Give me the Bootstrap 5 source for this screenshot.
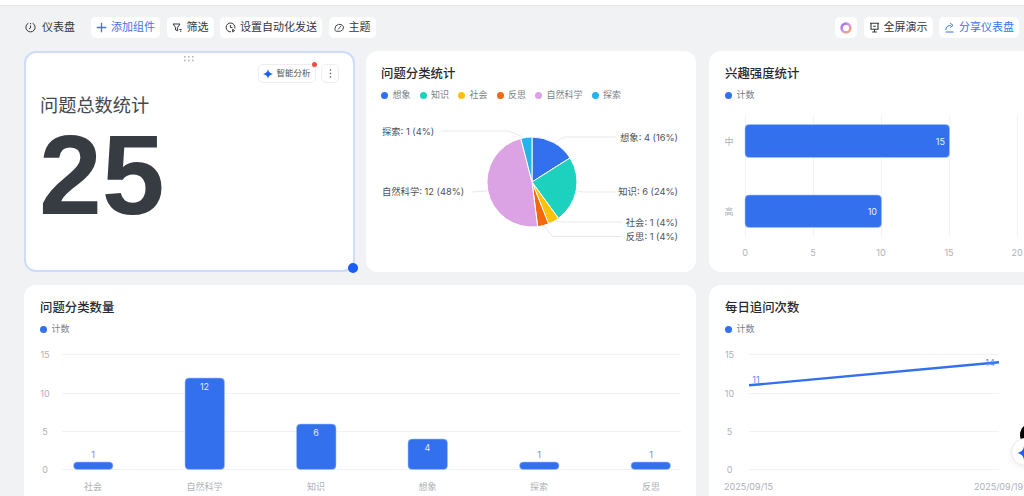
<!doctype html>
<html lang="zh-CN">
<head>
<meta charset="utf-8">
<title>仪表盘</title>
<link href="https://cdn.jsdelivr.net/npm/bootstrap@5.3.0/dist/css/bootstrap.min.css" rel="stylesheet">
<style>
html,body{height:496px;overflow:hidden}
body{background:#f1f2f4;font-family:Inter,"Noto Sans CJK SC",sans-serif;color:#33363b;width:1024px}
.topstrip{height:6px;background:#fff;border-bottom:1px solid #e6e8eb}
.toolbar{height:45px;padding:11px 5px 13px 25px;font-size:11px}
.pagename{margin-right:16px;gap:6px;color:#33363b;font-size:11px}
.toolgroup{gap:6.5px}
.tool-btn{height:21px;padding:0 5px;border:0;border-radius:5px;background:#fff;font-size:11px;line-height:21px;gap:4px;color:#33363b;white-space:nowrap}
.tool-btn.accent,.tool-btn.accent:hover{color:#3a74f0}
.tool-btn.icon-only{width:22px;padding:0}
.tool-btn svg{flex:none}
.board{display:grid;grid-template-columns:672px 340px;grid-template-rows:221px 240px;gap:13px;padding-left:24px;width:1060px}
.firstrow{gap:11px}
.panel{border:0;border-radius:12px;background:#fff;overflow:hidden}
.panel-a{width:331px;overflow:visible;border:2px solid #cddcfd;padding:0 14px}
.panel-b{width:330px}
.panel-head{padding:14px 15px 0}
.panel-wide .panel-head{padding-left:16px}
.panel-title{font-size:12.4px;line-height:18px;color:#26292e;font-weight:500}
.legend-row{margin-top:6px;gap:9px;font-size:9px;line-height:12px;color:#7a7f87}
.legend-dot{width:7px;height:7px;border-radius:50%;margin-right:4.5px;display:inline-block;flex:none}
.chart{display:block;margin-top:9px}
.chart text{font-size:9px;font-family:Inter,"Noto Sans CJK SC",sans-serif}
.chart text.pie-t{font-size:9.3px}
.axis-t{fill:#adb1b8}
.pie-t{fill:#4d5158}
.grid-l{stroke:#f1f2f4;stroke-width:1;fill:none}
.lead-l{stroke:#e7e9ec;stroke-width:1;fill:none}
.bar-s{fill:#3370ee;stroke:#a6c2f8;stroke-width:.6}
.val-w{fill:#e6edfd}
.val-b{fill:#5b8ef2}
.big-title{font-size:18.2px;line-height:24px;color:#44484e;margin-top:40px}
.big-num{font-family:"Liberation Sans",Arial,sans-serif;font-weight:700;font-size:113px;line-height:113px;color:#373c43;margin-top:2px;margin-left:-1px}
.grip{position:absolute;left:158px;top:3px;line-height:0}
.panel-actions{position:absolute;right:14px;top:11px;gap:5px}
.ai-btn{height:19px;padding:0 4.5px;border:1px solid #eceef1;border-radius:5px;background:#fff;font-size:8.5px;gap:3px;color:#4b4f55;position:relative;white-space:nowrap}
.more-btn{width:18px;height:19px;padding:0;border:1px solid #eceef1;border-radius:5px;background:#fff}
.red-dot{position:absolute;right:-2px;top:-3px;width:5px;height:5px;border-radius:50%;background:#f54a45}
.handle{position:absolute;right:-4.5px;bottom:-2.5px;width:10px;height:10px;border-radius:50%;background:#1a5cf5}
.blob{position:absolute;left:1020px;top:423px;width:24px;height:24px;border-radius:50%;background:#000}
.float-ai{position:absolute;left:1011px;top:438px;width:28px;height:28px;border-radius:50%;background:#fff;border:1px solid #e9ebee;box-shadow:0 2px 6px rgba(0,0,0,.06)}
.float-ai svg{position:absolute;left:5px;top:7px}
</style>
</head>
<body>
<div class="topstrip"></div>
<div class="toolbar d-flex align-items-center">
  <div class="pagename d-flex align-items-center">
    <svg width="11" height="11" viewBox="0 0 11 11" fill="none" stroke="#33363b" stroke-width="1"><path d="M3.4 1.200A4.600 4.600 0 1 0 7.600 1.200"/><path d="M5.500 1v1.200M5.500 3.500v2.400L4 6.800"/></svg>
    <span>仪表盘</span>
  </div>
  <div class="d-flex align-items-center toolgroup">
    <button class="btn tool-btn accent d-flex align-items-center"><svg width="11" height="11" viewBox="0 0 11 11" stroke="#3a74f0" stroke-width="1.300"><path d="M5.500 .8v9.400M.8 5.500h9.400"/></svg><span>添加组件</span></button>
    <button class="btn tool-btn d-flex align-items-center"><svg width="11" height="11" viewBox="0 0 11 11" fill="none" stroke="#33363b" stroke-width="1"><path d="M1 2h7L5.600 5.400v3.400L3.600 8V5.400zM7.400 7.500h2.200M7.900 9.200h1.400"/></svg><span>筛选</span></button>
    <button class="btn tool-btn d-flex align-items-center"><svg width="11" height="11" viewBox="0 0 11 11" fill="none" stroke="#33363b" stroke-width="1"><path d="M9.800 6.500A4.400 4.400 0 1 0 6 9.800"/><path d="M5.400 3v2.600h2M7.600 7.400l2 1.200-2 1.200z"/></svg><span>设置自动化发送</span></button>
    <button class="btn tool-btn d-flex align-items-center"><svg width="11" height="11" viewBox="0 0 12 11" fill="none" stroke="#33363b" stroke-width="1"><path d="M1 7a5 5 0 0 1 9.500-2.200A5 5 0 0 1 7 9.600H3A2 2 0 0 1 1 7zM4.500 7.500 8 3.500"/></svg><span>主题</span></button>
  </div>
  <div class="d-flex align-items-center ms-auto toolgroup">
    <button class="btn tool-btn icon-only d-flex align-items-center justify-content-center"><svg width="12" height="12" viewBox="0 0 12 12" fill="none" stroke-width="2.600"><defs><linearGradient id="ring" x1="0" y1="0" x2="1" y2="1"><stop offset="0" stop-color="#8f6bf2"/><stop offset=".5" stop-color="#d79ad9"/><stop offset="1" stop-color="#ffa366"/></linearGradient></defs><circle cx="6" cy="6" r="4.400" stroke="url(#ring)"/></svg></button>
    <button class="btn tool-btn d-flex align-items-center"><svg width="11" height="11" viewBox="0 0 11 11" fill="none" stroke="#33363b" stroke-width="1.100"><path d="M1 1.200h9M2 1.200v6h7v-6M5.500 7.200v2.600M3.200 10h4.600M4.200 4.200h2.600"/></svg><span>全屏演示</span></button>
    <button class="btn tool-btn accent d-flex align-items-center"><svg width="11" height="11" viewBox="0 0 11 11" fill="none" stroke="#3a74f0" stroke-width="1"><path d="M1.500 10h8M1.800 8c0-3 2-4.600 5-4.600M6.200 1.200 9 3.400 6.200 5.600"/></svg><span>分享仪表盘</span></button>
  </div>
</div>

<div class="board">
  <div class="d-flex firstrow">
    <div class="card panel panel-a position-relative">
      <div class="grip"><svg width="11" height="6" viewBox="0 0 11 6" fill="#b3b7bd"><rect x="0" y="0" width="1.600" height="1.600"/><rect x="4" y="0" width="1.600" height="1.600"/><rect x="8" y="0" width="1.600" height="1.600"/><rect x="0" y="3.600" width="1.600" height="1.600"/><rect x="4" y="3.600" width="1.600" height="1.600"/><rect x="8" y="3.600" width="1.600" height="1.600"/></svg></div>
      <div class="panel-actions d-flex">
        <div class="ai-btn d-flex align-items-center"><svg width="10" height="10" viewBox="0 0 12 12" fill="#1f5ff0"><path d="M6 0c.5 3.400 2.200 5.300 6 6-3.800.7-5.500 2.600-6 6-.5-3.400-2.200-5.300-6-6 3.800-.7 5.500-2.600 6-6z"/></svg><span>智能分析</span><i class="red-dot"></i></div>
        <div class="more-btn d-flex align-items-center justify-content-center"><svg width="3" height="9" viewBox="0 0 3 9" fill="#55595f"><circle cx="1.500" cy="1" r=".8"/><circle cx="1.500" cy="4.500" r=".8"/><circle cx="1.500" cy="8" r=".8"/></svg></div>
      </div>
      <div class="big-title">问题总数统计</div>
      <div class="big-num">25</div>
      <i class="handle"></i>
    </div>

    <div class="card panel panel-b">
      <div class="panel-head">
        <div class="panel-title">问题分类统计</div>
        <div class="legend-row d-flex">
          <span class="d-flex align-items-center"><i class="legend-dot" style="background:#3370ee"></i>想象</span>
          <span class="d-flex align-items-center"><i class="legend-dot" style="background:#1dd1bf"></i>知识</span>
          <span class="d-flex align-items-center"><i class="legend-dot" style="background:#ffc107"></i>社会</span>
          <span class="d-flex align-items-center"><i class="legend-dot" style="background:#f2690d"></i>反思</span>
          <span class="d-flex align-items-center"><i class="legend-dot" style="background:#dba2e4"></i>自然科学</span>
          <span class="d-flex align-items-center"><i class="legend-dot" style="background:#25b4ea"></i>探索</span>
        </div>
      </div>
      <svg class="chart" width="330" height="162" viewBox="366 110 330 162">
        <path class="lead-l" d="M441 131H509L523 137"/>
        <path class="lead-l" d="M616 137H564L554 143"/>
        <path class="lead-l" d="M471 192L487 191"/>
        <path class="lead-l" d="M616 192H583L577 191"/>
        <path class="lead-l" d="M622 222H558L556 221"/>
        <path class="lead-l" d="M622 236.500H553L543 225"/>
        <g transform="translate(532 182)" stroke="#fff" stroke-width="1">
          <path fill="#3370ee" d="M0 0V-45A45 45 0 0 1 38 -24.100Z"/>
          <path fill="#1dd1bf" d="M0 0L38 -24.100A45 45 0 0 1 26.450 36.400Z"/>
          <path fill="#ffc107" d="M0 0L26.450 36.400A45 45 0 0 1 16.570 41.840Z"/>
          <path fill="#f2690d" d="M0 0L16.570 41.840A45 45 0 0 1 5.640 44.650Z"/>
          <path fill="#dba2e4" d="M0 0L5.640 44.650A45 45 0 0 1 -11.190 -43.590Z"/>
          <path fill="#25b4ea" d="M0 0L-11.190 -43.590A45 45 0 0 1 0 -45Z"/>
        </g>
        <text class="pie-t" x="382" y="135">探索: 1 (4%)</text>
        <text class="pie-t" x="678" y="141" text-anchor="end">想象: 4 (16%)</text>
        <text class="pie-t" x="382" y="195">自然科学: 12 (48%)</text>
        <text class="pie-t" x="678" y="195" text-anchor="end">知识: 6 (24%)</text>
        <text class="pie-t" x="678" y="225.500" text-anchor="end">社会: 1 (4%)</text>
        <text class="pie-t" x="678" y="240" text-anchor="end">反思: 1 (4%)</text>
      </svg>
    </div>
  </div>

  <div class="card panel panel-wide">
    <div class="panel-head">
      <div class="panel-title">兴趣强度统计</div>
      <div class="legend-row d-flex"><span class="d-flex align-items-center"><i class="legend-dot" style="background:#3370ee"></i>计数</span></div>
    </div>
    <svg class="chart" width="340" height="162" viewBox="709 110 340 162">
      <path class="grid-l" d="M745.500 116V236M813.500 116V236M881.500 116V236M949.500 116V236M1017.500 116V236"/>
      <rect class="bar-s" x="745" y="124.500" width="204.500" height="33" rx="4"/>
      <rect class="bar-s" x="745" y="195" width="136.500" height="32.500" rx="4"/>
      <text class="val-w" x="945" y="144.500" text-anchor="end">15</text>
      <text class="val-w" x="877" y="214.500" text-anchor="end">10</text>
      <text class="axis-t" x="729" y="144.500" text-anchor="middle">中</text>
      <text class="axis-t" x="729" y="214.500" text-anchor="middle">高</text>
      <text class="axis-t" x="745" y="256" text-anchor="middle">0</text>
      <text class="axis-t" x="813" y="256" text-anchor="middle">5</text>
      <text class="axis-t" x="881" y="256" text-anchor="middle">10</text>
      <text class="axis-t" x="949" y="256" text-anchor="middle">15</text>
      <text class="axis-t" x="1017" y="256" text-anchor="middle">20</text>
    </svg>
  </div>

  <div class="card panel panel-wide">
    <div class="panel-head">
      <div class="panel-title">问题分类数量</div>
      <div class="legend-row d-flex"><span class="d-flex align-items-center"><i class="legend-dot" style="background:#3370ee"></i>计数</span></div>
    </div>
    <svg class="chart" width="672" height="156" viewBox="24 344 672 156">
      <path class="grid-l" d="M62 354.500H681M62 393.500H681M62 431.500H681M62 469.500H681"/>
      <text class="axis-t" x="45" y="358" text-anchor="middle">15</text>
      <text class="axis-t" x="45" y="396.500" text-anchor="middle">10</text>
      <text class="axis-t" x="45" y="435" text-anchor="middle">5</text>
      <text class="axis-t" x="45" y="473" text-anchor="middle">0</text>
      <rect class="bar-s" x="73.500" y="462" width="39.500" height="7.500" rx="3.700"/>
      <rect class="bar-s" x="185" y="378" width="39.500" height="91.500" rx="4"/>
      <rect class="bar-s" x="296.500" y="424" width="39.500" height="45.500" rx="4"/>
      <rect class="bar-s" x="408" y="439" width="39.500" height="30.500" rx="4"/>
      <rect class="bar-s" x="519.500" y="462" width="39.500" height="7.500" rx="3.700"/>
      <rect class="bar-s" x="631" y="462" width="39.500" height="7.500" rx="3.700"/>
      <text class="val-b" x="93" y="457.500" text-anchor="middle">1</text>
      <text class="val-w" x="204.500" y="389.500" text-anchor="middle">12</text>
      <text class="val-w" x="316" y="435.500" text-anchor="middle">6</text>
      <text class="val-w" x="427.500" y="450.500" text-anchor="middle">4</text>
      <text class="val-b" x="539" y="457.500" text-anchor="middle">1</text>
      <text class="val-b" x="651" y="457.500" text-anchor="middle">1</text>
      <text class="axis-t" x="93" y="490" text-anchor="middle">社会</text>
      <text class="axis-t" x="204.500" y="490" text-anchor="middle">自然科学</text>
      <text class="axis-t" x="316" y="490" text-anchor="middle">知识</text>
      <text class="axis-t" x="427.500" y="490" text-anchor="middle">想象</text>
      <text class="axis-t" x="539" y="490" text-anchor="middle">探索</text>
      <text class="axis-t" x="651" y="490" text-anchor="middle">反思</text>
    </svg>
  </div>

  <div class="card panel panel-wide">
    <div class="panel-head">
      <div class="panel-title">每日追问次数</div>
      <div class="legend-row d-flex"><span class="d-flex align-items-center"><i class="legend-dot" style="background:#3370ee"></i>计数</span></div>
    </div>
    <svg class="chart" width="340" height="156" viewBox="709 344 340 156">
      <path class="grid-l" d="M749 354.500H999M749 393.500H999M749 431.500H999M749 469.500H999"/>
      <text class="axis-t" x="729.500" y="358" text-anchor="middle">15</text>
      <text class="axis-t" x="729.500" y="396.500" text-anchor="middle">10</text>
      <text class="axis-t" x="729.500" y="435" text-anchor="middle">5</text>
      <text class="axis-t" x="729.500" y="473" text-anchor="middle">0</text>
      <path d="M749 385.300L999 362.300" fill="none" stroke="#3370ee" stroke-width="2.400"/>
      <text class="val-b" x="756" y="382.500" text-anchor="middle">11</text>
      <text class="val-b" x="990" y="366" text-anchor="middle">14</text>
      <text class="axis-t" x="724" y="490">2025/09/15</text>
      <text class="axis-t" x="974" y="490">2025/09/19</text>
    </svg>
  </div>
</div>

<i class="blob"></i>
<div class="float-ai"><svg width="14" height="14" viewBox="0 0 12 12" fill="#1f5ff0"><path d="M6 0c.5 3.400 2.200 5.300 6 6-3.800.7-5.500 2.600-6 6-.5-3.400-2.200-5.300-6-6 3.800-.7 5.500-2.600 6-6z"/></svg></div>

<script src="https://cdn.jsdelivr.net/npm/bootstrap@5.3.0/dist/js/bootstrap.bundle.min.js"></script>
</body>
</html>
